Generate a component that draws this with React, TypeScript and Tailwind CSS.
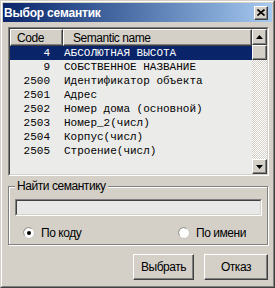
import React from "react";

const rows: [string, string][] = [
  ["4", "АБСОЛЮТНАЯ ВЫСОТА"],
  ["9", "СОБСТВЕННОЕ НАЗВАНИЕ"],
  ["2500", "Идентификатор объекта"],
  ["2501", "Адрес"],
  ["2502", "Номер дома (основной)"],
  ["2503", "Номер_2(числ)"],
  ["2504", "Корпус(числ)"],
  ["2505", "Строение(числ)"],
];

const narrow = "font-['Liberation_Sans',Arial,sans-serif] tracking-[-0.45px]";

function Radio({ checked }: { checked: boolean }) {
  return (
    <svg width="12" height="12" viewBox="0 0 12 12" className="shrink-0">
      <circle cx="6" cy="6" r="5.5" fill="#ffffff" stroke="#c4c2bc" strokeWidth="1" />
      <path d="M1.5 8.5 A5 5 0 0 1 8.5 1.5" fill="none" stroke="#9a9894" strokeWidth="1" />
      {checked && <circle cx="6" cy="6" r="2" fill="#000" />}
    </svg>
  );
}

function Arrow({ up }: { up: boolean }) {
  return (
    <svg width="7" height="4" viewBox="0 0 7 4">
      {up ? <path d="M3.5 0 L7 4 L0 4 Z" fill="#000" /> : <path d="M0 0 L7 0 L3.5 4 Z" fill="#000" />}
    </svg>
  );
}

const raised =
  "border border-t-white border-l-white border-r-[#404040] border-b-[#404040] shadow-[inset_-1px_-1px_0_#808080] bg-[#d4d0c8]";

export default function App() {
  return (
    <div className="w-[275px] h-[288px] bg-[#d4d0c8] border border-t-[#d4d0c8] border-l-[#d4d0c8] border-r-[#404040] border-b-[#404040]">
      <div className="h-full border border-t-white border-l-white border-r-[#808080] border-b-[#808080] p-px flex flex-col">
        {/* Title bar */}
        <div className="h-[19px] shrink-0 bg-linear-to-r from-[#0a246a] to-[#a6caf0] flex items-center justify-between pl-[1px] pr-[4px]">
          <span className="text-white font-bold text-[12px] leading-none font-['Liberation_Sans',Arial,sans-serif] tracking-[-0.2px]">
            Выбор семантик
          </span>
          <div className={`w-[14px] h-[14px] flex items-center justify-center ${raised}`}>
            <svg width="8" height="7" viewBox="0 0 8 7">
              <path d="M0.5 0.5 L7.5 6.5 M7.5 0.5 L0.5 6.5" stroke="#000" strokeWidth="1.6" />
            </svg>
          </div>
        </div>

        {/* List box */}
        <div className="mt-[5px] ml-[5px] w-[261px] h-[149px] border border-t-[#808080] border-l-[#808080] border-r-white border-b-white">
          <div className="h-full border border-t-[#404040] border-l-[#404040] border-r-[#d4d0c8] border-b-[#d4d0c8] bg-[#ebebea] flex">
            <div className="flex-1 flex flex-col">
              <div className={`h-[17px] flex ${narrow} text-[12px] text-black`}>
                <div className={`w-[53px] h-full flex items-center pl-[6px] ${raised}`}>Code</div>
                <div className={`flex-1 h-full flex items-center pl-[9px] ${raised}`}>Semantic name</div>
              </div>
              <div className="font-['Liberation_Mono','Courier_New',monospace] text-[11px] leading-none">
                {rows.map(([code, name], i) => (
                  <div
                    key={code}
                    className={`h-[14px] flex items-center ${i === 0 ? "bg-[#0a246a] text-white" : "text-black"}`}
                  >
                    <span className="w-[40px] text-right">{code}</span>
                    <span className="ml-[14px] whitespace-pre">{name}</span>
                  </div>
                ))}
              </div>
            </div>
            {/* Scrollbar */}
            <div className="w-[15px] flex flex-col bg-[repeating-conic-gradient(#ffffff_0_25%,#d4d0c8_0_50%)] bg-size-[2px_2px]">
              <div className={`h-[16px] flex items-center justify-center ${raised}`}>
                <Arrow up />
              </div>
              <div className={`h-[15px] ${raised}`} />
              <div className="flex-1" />
              <div className={`h-[15px] flex items-center justify-center ${raised}`}>
                <Arrow up={false} />
              </div>
            </div>
          </div>
        </div>

        {/* Group box */}
        <div className="relative mt-[10px] ml-[5px] w-[260px] h-[59px] border border-[#808080] shadow-[inset_1px_1px_0_#fff,1px_1px_0_#fff]">
          <span className={`absolute left-[6px] top-[-8px] px-[2px] bg-[#d4d0c8] ${narrow} text-[12px] leading-[14px] text-black`}>
            Найти семантику
          </span>
          <div className="ml-[6px] mt-[12px] w-[247px] h-[17px] border border-t-[#808080] border-l-[#808080] border-r-white border-b-white">
            <div className="h-full border border-t-[#404040] border-l-[#404040] border-r-[#d4d0c8] border-b-[#d4d0c8] bg-[#e8e8e8]" />
          </div>
          <div className={`mt-[10px] flex items-center justify-between pl-[14px] pr-[21px] ${narrow} text-[12px] leading-[14px] text-black`}>
            <div className="flex items-center gap-[6px]">
              <Radio checked />
              <span>По коду</span>
            </div>
            <div className="flex items-center gap-[6px]">
              <Radio checked={false} />
              <span>По имени</span>
            </div>
          </div>
        </div>

        {/* Buttons */}
        <div className={`mt-[9px] flex justify-end gap-[10px] pr-[4px] ${narrow} text-[12px] text-black`}>
          <div className={`w-[61px] h-[26px] flex items-center justify-center ${raised}`}>Выбрать</div>
          <div className={`w-[64px] h-[26px] flex items-center justify-center ${raised}`}>Отказ</div>
        </div>
      </div>
    </div>
  );
}
